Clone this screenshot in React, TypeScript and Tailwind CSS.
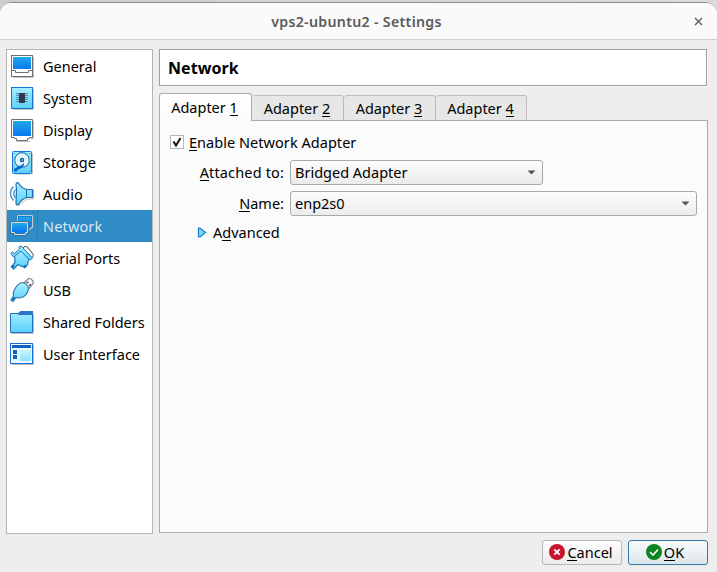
import type { ReactNode } from "react";

const Defs = () => (
  <svg className="block h-0 w-0" width="0" height="0">
    <defs>
      <linearGradient id="screen" x1="0" y1="0" x2="0" y2="1">
        <stop offset="0" stopColor="#20a9e8" />
        <stop offset="1" stopColor="#0878f0" />
      </linearGradient>
      <linearGradient id="pale" x1="0" y1="0" x2="0" y2="1">
        <stop offset="0" stopColor="#a8efff" />
        <stop offset="1" stopColor="#5ad0fc" />
      </linearGradient>
    </defs>
  </svg>
);

const Icon = ({ children }: { children: ReactNode }) => (
  <svg width="26" height="26" viewBox="0 0 26 26" className="shrink-0">
    {children}
  </svg>
);

const GeneralIcon = () => (
  <Icon>
    <path d="M3 24.5H23.5V4" fill="none" stroke="#c4c4c4" />
    <rect x="1.5" y="2.5" width="21" height="21" fill="#fff" stroke="#707070" />
    <rect x="3" y="4" width="18" height="12" fill="url(#screen)" />
    <path d="M2 17.5H5.500V19.500H18.500V17.500H22" fill="none" stroke="#707070" />
  </Icon>
);

const SystemIcon = () => (
  <Icon>
    <path d="M3 24.5H23.500V4" fill="none" stroke="#c4c4c4" />
    <rect x="1.5" y="2.5" width="21" height="21" fill="url(#pale)" stroke="#1677d2" />
    <path d="M6 8.500H18M6 10.500H18M6 12.500H18M6 14.500H18M6 16.500H18" stroke="#4f91af" />
    <rect x="9" y="8" width="6" height="10" fill="#343846" />
  </Icon>
);

const DisplayIcon = () => (
  <Icon>
    <path d="M23.500 4V21.500H21M20 24.500H6" fill="none" stroke="#c4c4c4" />
    <path d="M1.500 2.500H22.500V20.500H19.500V21.500H17.500V23.500H6.500V21.500H4.500V20.500H1.500Z" fill="#fff" stroke="#707070" />
    <rect x="3" y="4" width="18" height="15" fill="url(#screen)" />
  </Icon>
);

const StorageIcon = () => (
  <Icon>
    <path d="M5 25H22.500V4" fill="none" stroke="#c4c4c4" />
    <rect x="2.500" y="2.500" width="19" height="22" rx="1" fill="url(#pale)" stroke="#1677d2" />
    <circle cx="12" cy="11" r="7.300" fill="#e1f7ff" stroke="#3182bd" strokeWidth="1.200" />
    <circle cx="12" cy="11" r="2.200" fill="#0754a3" />
    <circle cx="12" cy="11" r=".8" fill="#fff" />
    <path d="M4 20L9 17Q13 16 14 13.500Q15 18 8 20.500L6 23L4 22Z" fill="#0961bd" />
    <path d="M4 4.500H5M19 4.500H20M19 22.500H20" stroke="#1f85cf" />
  </Icon>
);

const AudioIcon = () => (
  <Icon>
    <path d="M8 25L17 18H23.500V9" fill="none" stroke="#bdbdbd" />
    <path d="M3.500 5.500C-.5 9-.5 16 3.500 19.500M5.500 8.500C3.500 11 3.500 14.500 5.500 17" fill="none" stroke="#3185c8" strokeWidth="1.200" />
    <path d="M6.500 9L6 3.500Q6.500 1 8.500 2Q11 7 16.500 8.500H22.500V16.500H16.500Q11 18.500 8.500 23.500Q6 24.500 6 22Z" fill="url(#pale)" stroke="#226fae" strokeWidth="1.200" />
    <path d="M16.500 9V16" stroke="#226fae" />
  </Icon>
);

const NetworkIcon = () => (
  <Icon>
    <path d="M7.500 2.500H22.500V14.500H20.500V16.500H10.500V14.500H7.500Z" fill="#167fd0" stroke="#c3ccd1" />
    <rect x="9" y="4" width="12" height="9" fill="url(#screen)" />
    <path d="M.5 8.500H18.500V20.500H16.500V22.500H3.500V20.500H.5Z" fill="#2579b3" stroke="#47728e" />
    <path d="M1.500 9.500H17.500V19.500H15.500V21.500H4.500V19.500H1.500Z" fill="#167fd0" stroke="#d7dde0" />
    <rect x="2" y="10" width="15" height="9" fill="url(#screen)" />
  </Icon>
);

const SerialIcon = () => (
  <Icon>
    <path d="M12.500 3.500L14.500 1.500Q17 1 18.500 3.500L23 9Q24 11.500 21 13Z" fill="#fff" stroke="#777" strokeWidth="1.200" />
    <path d="M13 4L21 12.500" stroke="#999" />
    <path d="M4.500 10L11.500 4L20 13.500L18 16L17.500 20L12 21.500L8 19.500L3.500 24L1.500 21.500L5 17.500Z" fill="url(#pale)" stroke="#1b76b7" strokeWidth="1.200" />
    <path d="M.8 8.500L2.500 7L4.500 8.500L9.500 4L9 2L11 1L22.500 13L20.500 15L18.500 14L11 6L5.500 10.500L3.500 12Z" fill="url(#pale)" stroke="#1b76b7" />
    <path d="M1.500 22.500L4 20.500M13.500 22.500L16.500 21" stroke="#1769ba" strokeWidth="2.200" />
  </Icon>
);

const UsbIcon = () => (
  <Icon>
    <path d="M13.500 6.500L18.500 1.500Q20.500 1 23 4Q23.500 5.500 23 6.500L18.500 12Z" fill="#fff" stroke="#858585" strokeWidth="1.200" />
    <path d="M16.500 5.500H18.500M19 8H21" stroke="#444" strokeWidth="1.500" />
    <path d="M13 5.500Q18 7 18.500 11.500Q18 17 13 20Q8.500 21.500 6 20.500L3 24.500L1 23L3.500 19Q2.500 15 6 10Q9 6 13 5.500Z" fill="url(#pale)" stroke="#3975a8" strokeWidth="1.200" />
    <path d="M4.500 20.500L2 23.500" stroke="#1773bf" strokeWidth="2.200" />
  </Icon>
);

const FolderIcon = () => (
  <Icon>
    <path d="M1 24.500H23.500V5" fill="none" stroke="#bdbdbd" />
    <path d="M.5 4.500H8L10.500 2.500H22.500V23.500H.5Z" fill="url(#pale)" stroke="#1d72c2" />
    <path d="M8 5L11 2H23V6H8Z" fill="#2875ca" />
  </Icon>
);

const InterfaceIcon = () => (
  <Icon>
    <path d="M2 23.500H23.500V4" fill="none" stroke="#bdbdbd" />
    <rect x=".5" y="2.500" width="22" height="20" fill="#e8faff" stroke="#176dd0" />
    <rect x="2" y="4" width="19" height="3" fill="#1263bf" />
    <rect x="10" y="9" width="11" height="11" fill="url(#pale)" opacity=".6" />
    <path d="M3 9H7V13H3ZM3 14H7V18H3Z" fill="#1263bf" />
  </Icon>
);

const items = [
  { label: "General", icon: GeneralIcon },
  { label: "System", icon: SystemIcon },
  { label: "Display", icon: DisplayIcon },
  { label: "Storage", icon: StorageIcon },
  { label: "Audio", icon: AudioIcon },
  { label: "Network", icon: NetworkIcon },
  { label: "Serial Ports", icon: SerialIcon },
  { label: "USB", icon: UsbIcon },
  { label: "Shared Folders", icon: FolderIcon },
  { label: "User Interface", icon: InterfaceIcon },
];

const Key = ({ children }: { children: ReactNode }) => (
  <span className="inline-block h-[18px] border-b border-black leading-[18px]">{children}</span>
);

const Combo = ({ children, width }: { children: ReactNode; width: string }) => (
  <div className={`flex h-[25px] items-center justify-between rounded-[3px] border border-[#a9a9a9] bg-linear-to-b from-[#fdfdfd] to-[#ebebeb] pr-[6px] pl-1 ${width}`}>
    <span className="pb-[2px]">{children}</span>
    <svg width="9" height="5" viewBox="0 0 9 5"><path d="M.5 .5H8.500L4.500 4.500Z" fill="#555" /></svg>
  </div>
);

export default function App() {
  return (
    <div className="h-[572px] w-[717px] overflow-hidden bg-linear-to-r from-[#cccdd0] to-[#dcdcdf] pt-[2px] font-['Noto_Sans','Open_Sans',sans-serif] text-[14.5px] leading-[20px] text-black">
      <Defs />
      <div className="flex h-[570px] flex-col rounded-t-[12px] border-t border-[#8e8e91] bg-[#eee]">
        <header className="grid h-[37px] shrink-0 grid-cols-[1fr_auto_1fr] items-center rounded-t-[11px] border-b border-[#d0d0d0] bg-[#fafafa]">
          <span />
          <h1 className="mr-[4px] pt-px text-[14.2px] font-semibold tracking-[0.3px] text-[#5b5b5b]">vps2-ubuntu2 - Settings</h1>
          <svg className="mr-[14px] justify-self-end" width="9" height="9" viewBox="0 0 9 9"><path d="M1 1L8 8M8 1L1 8" stroke="#5d5d5d" strokeWidth="1.400" /></svg>
        </header>
        <div className="flex gap-[6px] pt-[9px] pl-[6px]">
          <nav className="h-[485px] w-[147px] shrink-0 border border-[#b5b5b5] bg-white">
            {items.map(({ label, icon: ItemIcon }) => (
              <div key={label} className={`flex h-8 items-center pl-[3px] whitespace-nowrap ${label === "Network" ? "bg-[#308cc6] text-[#d9e9f3]" : ""}`}>
                <ItemIcon />
                <span className={`ml-px flex h-8 items-center border-l pb-px pl-[5px] ${label === "Network" ? "grow border-[#2b7eb2] tracking-[0.15px]" : "border-transparent"}`}>{label}</span>
              </div>
            ))}
          </nav>
          <main className="w-[549px]">
            <h2 className="flex h-[37px] w-[548px] items-center border border-[#9e9e9e] bg-white pl-2 text-[16px] font-bold tracking-[0.05px] shadow-[1px_1px_0_#fafafa]">Network</h2>
            <div className="mt-[7px] flex h-[27px] items-end">
              <div className="relative z-10 -mb-px flex h-[28px] w-[93px] items-center justify-center rounded-t-[3px] border border-b-0 border-[#ababab] bg-linear-to-b from-white to-[#fbfbfb] pr-[2px] pb-[2px] whitespace-pre">Adapter <Key>1</Key></div>
              {["2", "3", "4"].map((n) => (
                <div key={n} className={`flex h-[25px] items-center justify-center rounded-t-[3px] border border-b-0 border-l-0 border-[#bcbcbc] bg-[#e7e7e7] pr-px whitespace-pre ${n === "4" ? "w-[91px]" : "w-[92px]"}`}>Adapter <Key>{n}</Key></div>
              ))}
            </div>
            <section className="h-[413px] w-[549px] border border-[#ababab] bg-[#fbfbfb] pt-[11px]">
              <label className="flex h-[20px] items-center pl-[10px]">
                <span className="flex h-[14px] w-[14px] items-center justify-center border border-[#b5b5b5] bg-white">
                  <svg width="10" height="10" viewBox="0 0 10 10"><path d="M1.500 4.500L4 8.500L8.500 1" fill="none" stroke="#111" strokeWidth="2" /></svg>
                </span>
                <span className="ml-[5px] tracking-[0.04px] whitespace-pre"><Key>E</Key>nable Network Adapter</span>
              </label>
              <div className="mt-[8px] grid grid-cols-[124px_1fr] items-center gap-x-[6px] gap-y-[6px]">
                <span className="pb-[2px] text-right tracking-[0.15px]"><Key>A</Key>ttached to:</span>
                <Combo width="w-[253px]">Bridged Adapter</Combo>
                <span className="pb-[2px] text-right"><Key>N</Key>ame:</span>
                <Combo width="w-[407px]">enp2s0</Combo>
              </div>
              <div className="mt-[6px] flex items-center pl-[37px]">
                <svg width="10" height="11" viewBox="0 0 10 11"><path d="M1.500 1H3L8.500 5.500L3 10H1.500Z" fill="#7bd6fc" stroke="#197bd0" strokeWidth="1.200" /></svg>
                <span className="ml-[6px]">A<Key>d</Key>vanced</span>
              </div>
            </section>
          </main>
        </div>
        <footer className="mt-[6px] flex justify-end gap-[6px] pr-[9px]">
          <button className="flex h-[25px] w-[80px] items-center justify-center gap-[2px] rounded-[3px] border border-[#b5b5b5] bg-linear-to-b from-[#fdfdfd] to-[#ececec] pr-[2px] pb-[2px]">
            <svg width="16" height="16" viewBox="0 0 16 16"><circle cx="8" cy="8" r="8" fill="#c7162b" /><path d="M5.300 5.300L10.700 10.700M10.700 5.300L5.300 10.700" stroke="#fff" strokeWidth="1.800" /></svg>
            <span><Key>C</Key>ancel</span>
          </button>
          <button className="flex h-[25px] w-[80px] items-center justify-center gap-[2px] rounded-[3px] border border-[#3079a8] bg-linear-to-b from-[#fafcfd] to-[#dde5ea] pr-[6px] pb-[2px]">
            <svg width="16" height="16" viewBox="0 0 16 16"><circle cx="8" cy="8" r="8" fill="#0e8420" /><path d="M4 8L7 11L12 5.500" fill="none" stroke="#fff" strokeWidth="1.600" /></svg>
            <span><Key>O</Key>K</span>
          </button>
        </footer>
      </div>
    </div>
  );
}
